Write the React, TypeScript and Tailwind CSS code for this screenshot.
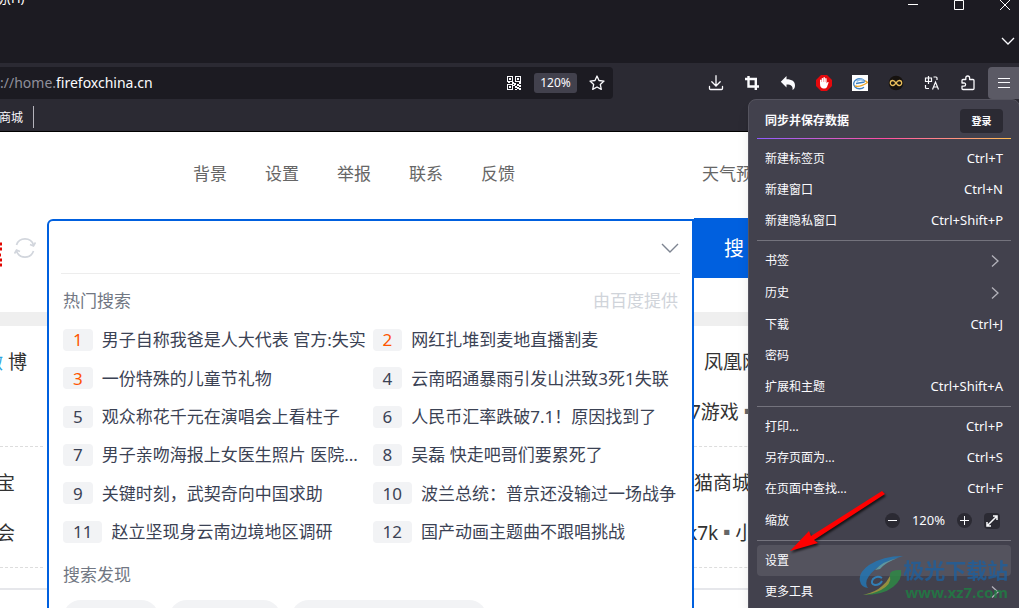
import React from 'react'

const hotList = [
  '男子自称我爸是人大代表 官方:失实',
  '网红扎堆到麦地直播割麦',
  '一份特殊的儿童节礼物',
  '云南昭通暴雨引发山洪致3死1失联',
  '观众称花千元在演唱会上看柱子',
  '人民币汇率跌破7.1！原因找到了',
  '男子亲吻海报上女医生照片 医院...',
  '吴磊 快走吧哥们要累死了',
  '关键时刻，武契奇向中国求助',
  '波兰总统：普京还没输过一场战争',
  '赵立坚现身云南边境地区调研',
  '国产动画主题曲不跟唱挑战',
]

const siteNav = ['背景', '设置', '举报', '联系', '反馈']

const iconBtn = 'flex size-9 shrink-0 items-center justify-center'

const WindowBar = () => (
  <header className="flex h-[63px] shrink-0 flex-col items-end justify-between bg-[#1c1b22]">
    <div className="flex w-full justify-between">
      <span className="-mt-2.5 -ml-1.5 h-5 text-[13px] leading-4 text-white">助(H)</span>
      <div className="flex h-[10px] gap-9 pr-[9px]">
        <button aria-label="最小化">
          <svg className="size-[10px]" viewBox="0 0 10 10" fill="none" stroke="#fff">
            <path d="M0 4.5h10" />
          </svg>
        </button>
        <button aria-label="最大化">
          <svg className="size-[10px]" viewBox="0 0 10 10" fill="none" stroke="#fff">
            <path d="M.5.5h9v9h-9z" />
          </svg>
        </button>
        <button aria-label="关闭">
          <svg className="size-[10px]" viewBox="0 0 10 10" fill="none" stroke="#fff">
            <path d="M0 0l10 10M10 0L0 10" />
          </svg>
        </button>
      </div>
    </div>
    <button aria-label="列出所有标签页" className="mr-[3px] mb-4 h-3">
      <svg className="h-3 w-4" viewBox="0 0 16 12" fill="none" stroke="#fbfbfe" strokeWidth="1.3">
        <path d="M2 3l6 6 6-6" />
      </svg>
    </button>
  </header>
)

const QrIcon = () => (
  <svg className="size-[15px]" viewBox="0 0 15 15" fill="#fbfbfe" shapeRendering="crispEdges">
    <path
      fillRule="evenodd"
      d="M0 0h6v6H0zM1 1v4h4V1zM8 0h6v6H8zM9 1v4h4V1zM0 8h6v6H0zM1 9v4h4V9zM2 2h2v2H2zM10 2h2v2h-2zM2 10h2v2H2z"
    />
    <path d="M1 6h2v1H1zM5 6h2v2H5zM7 7h2v2H7zM12 6h2v2h-2zM10 8h2v2h-2zM12 9h2v2h-2zM8 10h2v2H8zM10 11h2v2h-2zM8 13h2v1H8zM12 12h2v2h-2zM6 9h2v1H6z" />
  </svg>
)

const Toolbar = () => (
  <div className="flex h-9 shrink-0 items-center justify-between bg-[#2b2a33]">
    <div className="mt-1 flex h-8 w-[613px] items-center rounded-r bg-[#1c1b22] pr-2">
      <p className="flex-1 pb-px text-[14px] text-[#8f8f9b]">
        ://home.<span className="text-[#fbfbfe]">firefoxchina.cn</span>
      </p>
      <button aria-label="二维码" className="mr-3">
        <QrIcon />
      </button>
      <button className="mr-3 h-5 w-[43px] rounded-[3px] bg-[#42414d] text-[12px] text-[#fbfbfe]">120%</button>
      <button aria-label="添加书签">
        <svg className="size-4" viewBox="0 0 16 16" fill="none" stroke="#fbfbfe" strokeWidth="1.3" strokeLinejoin="round">
          <path d="M8 1l2 4.5 5 .6-3.7 3.3 1 5L8 12l-4.3 2.4 1-5L1 6.1l5-.6z" />
        </svg>
      </button>
    </div>
    <div className="flex h-9 items-center pt-1">
      <button aria-label="下载" className={iconBtn}>
        <svg className="size-4" viewBox="0 0 16 16" fill="none" stroke="#fbfbfe" strokeWidth="1.3" strokeLinecap="round">
          <path d="M8 .7v10M3.8 6.8L8 11l4.2-4.2M1.500 11.5v2q0 1 1 1h11q1 0 1-1v-2" />
        </svg>
      </button>
      <button aria-label="截图" className={iconBtn}>
        <svg className="size-4" viewBox="0 0 16 16" fill="none" stroke="#fbfbfe" strokeWidth="2.4">
          <path d="M1 4h10.8v11M4.5 1v10.5H15" />
        </svg>
      </button>
      <button aria-label="撤销" className={iconBtn}>
        <svg className="size-4" viewBox="0 0 16 16" fill="#fbfbfe">
          <path d="M6.5 1v3.3c5.5 0 8.5 2.2 8.5 6.2 0 2-.8 3.5-2.5 4.5.6-3.5-1-5.500-6-5.500v3L.8 6.8z" />
        </svg>
      </button>
      <button aria-label="广告拦截" className={iconBtn}>
        <svg className="size-4" viewBox="0 0 16 16">
          <path d="M5 0h6l5 5v6l-5 5H5l-5-5V5z" fill="#e4090d" />
          <path
            d="M4 8.500V5q.7-.8 1.400 0v2h.3V3.300q.7-.8 1.400 0V7h.3V2.500q.8-.8 1.500 0V7h.3V3.500q.7-.8 1.400 0v5l1-1.500q1.200-.3 1 .6L11 12q-.9 1.500-2.500 1.500H7.200Q4 13 4 8.500z"
            fill="#fff"
          />
        </svg>
      </button>
      <button aria-label="网页助手" className={iconBtn}>
        <svg className="size-4" viewBox="0 0 16 16" fill="none">
          <path d="M0 0h16v16H0z" fill="#fff" />
          <path d="M12 12.2A6 5 0 1 1 13 6.5M4 8.5l8.5-1.5" stroke="#3c7fc0" strokeWidth="1.3" />
          <path d="M4.5 6.2q3.5-3 7-1" stroke="#8dbbe6" strokeWidth="2" />
          <path d="M3 11q5 1.5 12.5-3.5-1-1.5-2.5-1.5" stroke="#eda528" strokeWidth="1.4" />
        </svg>
      </button>
      <button aria-label="无限新标签页" className={iconBtn}>
        <svg className="size-4" viewBox="0 0 16 16" fill="none">
          <circle cx="8" cy="8" r="7.3" fill="#16120f" />
          <path
            d="M8 8c-1.500-2-2.200-2.500-3.200-2.500a2.400 2.400 0 0 0 0 5C5.800 10.500 6.500 10 8 8s2.200-2.500 3.200-2.500a2.400 2.400 0 0 1 0 5C10.200 10.500 9.500 10 8 8z"
            stroke="#e8bd5b"
            strokeWidth="1.3"
          />
        </svg>
      </button>
      <button aria-label="翻译" className={iconBtn}>
        <svg className="size-4" viewBox="0 0 16 16" fill="none" stroke="#fbfbfe" strokeWidth="1.2">
          <path d="M1.5 3h6v3.500h-6zM4.500 1v8M9.500 2h2.500q1 0 1 1v2M1.500 10v2.500q0 1 1 1H5M8.500 14.500L11.500 7l3 7.500M9.500 12h4" />
        </svg>
      </button>
      <button aria-label="扩展" className={iconBtn}>
        <svg className="size-4" viewBox="0 0 16 16" fill="none" stroke="#fbfbfe" strokeWidth="1.3" strokeLinejoin="round">
          <path d="M5.800 4.500V3q0-2 1.900-2t1.900 2v1.500H13q1 0 1 1v8q0 1-1 1H3q-1 0-1-1v-2.300h2q1.600 0 1.600-1.600T4 8H2V5.500q0-1 1-1z" />
        </svg>
      </button>
      <button
        aria-label="打开应用程序菜单"
        className="ml-0.5 flex h-8 w-[31px] items-center justify-center rounded-l bg-[#5b5a65]"
      >
        <svg className="h-3 w-3" viewBox="0 0 12 12" stroke="#fbfbfe" strokeWidth="1">
          <path d="M0 1.5h12M0 5.5h12M0 10.5h12" />
        </svg>
      </button>
    </div>
  </div>
)

const Suggestions = () => (
  <div className="absolute inset-x-0 top-px h-[480px] rounded-tl-md border-2 border-[#0060df] bg-white">
    <div className="mx-3 flex h-[53px] items-center border-b border-[#ededed] pr-px">
      <input aria-label="搜索" className="h-10 flex-1 outline-none" />
      <svg className="h-3 w-[18px]" viewBox="0 0 18 12" fill="none" stroke="#7d8491" strokeWidth="1.4">
        <path d="M1 3l8 8 8-8" />
      </svg>
    </div>
    <div className="pr-3 pl-[14px]">
      <div className="mt-[15px] flex justify-between pr-0.5 text-[17px] leading-6">
        <h2 className="text-[#717783]">热门搜索</h2>
        <span className="text-[#d0d4da]">由百度提供</span>
      </div>
      <ol className="mt-2 grid h-[230px] grid-cols-2 grid-rows-6 items-center gap-x-0.5 text-[17px] text-[#3b4254]">
        {hotList.map((title, i) => (
          <li key={title} className="flex items-center whitespace-nowrap">
            <span
              className={`mr-[9px] flex h-[22px] items-center rounded bg-[#f2f3f5] px-[10px] ${i < 3 ? 'text-[#ff5500]' : ''}`}
            >
              {i + 1}
            </span>
            <a href="#">{title}</a>
          </li>
        ))}
      </ol>
      <h2 className="mt-3 text-[17px] leading-6 text-[#717783]">搜索发现</h2>
      <div className="mt-[13px] flex gap-[10px]">
        <span className="h-9 w-24 rounded-full bg-[#f2f3f5]" />
        <span className="h-9 w-28 rounded-full bg-[#f2f3f5]" />
        <span className="h-9 w-[196px] rounded-full bg-[#f2f3f5]" />
      </div>
    </div>
  </div>
)

const Page = () => (
  <main className="flex-1 overflow-hidden bg-white">
    <nav className="flex h-[84px] items-center justify-between text-[17px] text-[#666]">
      <div className="flex gap-[38px] pl-[193px]">
        {siteNav.map((item) => (
          <a key={item} href="#">
            {item}
          </a>
        ))}
      </div>
      <a href="#" className="w-[317px]">
        天气预
      </a>
    </nav>
    <div className="mt-0.5 flex h-[94px]">
      <div className="flex h-[60px] w-[47px] items-center gap-3 overflow-hidden">
        <svg className="mt-3 h-8 w-0.5" viewBox="0 0 2 32" stroke="#e10601" strokeWidth="3">
          <path d="M0 6h2M0 11h2M0 17h1M0 22h2M0 27h2" />
        </svg>
        <svg className="size-[22px] shrink-0" viewBox="0 0 22 22" fill="none" stroke="#d2d6dd" strokeWidth="1.7">
          <path d="M2.5 8A9 9 0 0 1 19.5 8M19.5 14A9 9 0 0 1 2.5 14M21.5 5.5L19.5 9l-3.5-1.5M.5 16.5L2.5 13 6 14.5" />
        </svg>
      </div>
      <div className="relative z-10 flex-1">
        <Suggestions />
      </div>
      <button className="h-[60px] w-[325px] bg-[#0060df] pt-0.5 pl-[30px] text-left text-[20px] text-white">搜</button>
    </div>
    <div className="h-3.5 bg-[#efefef]" />
    <div className="flex justify-between overflow-hidden border-b-2 border-[#e6e7eb] pb-5 text-[19px] text-[#333]">
      <ul className="flex w-[43px] flex-col">
        <li className="flex h-[121px] justify-end border-b border-dashed border-[#ddd] pt-[22px] pr-4">
          <a href="#" className="leading-7 whitespace-nowrap">
            <span className="text-[#29a3e0]">微</span> 博
          </a>
        </li>
        <li className="flex h-[121px] flex-col items-end gap-[22px] border-b border-dashed border-[#ddd] pt-[22px] pr-7">
          <a href="#" className="leading-7 whitespace-nowrap">宝</a>
          <a href="#" className="leading-7 whitespace-nowrap">会</a>
        </li>
      </ul>
      <ul className="flex w-[325px] flex-col">
        <li className="flex h-[121px] flex-col gap-[22px] border-b border-dashed border-[#ddd] pt-[22px]">
          <a href="#" className="pl-[10px] leading-7">凤凰网</a>
          <a href="#" className="-ml-1 leading-7">
            7游戏<span className="-ml-px text-[#666]">▪</span>
          </a>
        </li>
        <li className="flex h-[121px] flex-col gap-[22px] border-b border-dashed border-[#ddd] pt-[22px]">
          <a href="#" className="leading-7">猫商城</a>
          <a href="#" className="-ml-[7px] leading-7">
            k7k<span className="-mx-px text-[#666]">▪</span>小
          </a>
        </li>
      </ul>
    </div>
  </main>
)

type MenuItemProps = { label: string; hint?: string; sub?: boolean; active?: boolean }

const MenuItem = ({ label, hint, sub, active }: MenuItemProps) => (
  <button
    className={`flex w-full items-center justify-between rounded px-2 ${sub ? 'h-8' : 'h-[31px]'} ${active ? 'bg-[#54535e]' : ''}`}
  >
    <span>{label}</span>
    {hint && <span className="text-[13px]">{hint}</span>}
    {sub && (
      <svg className="mr-1 h-3 w-2" viewBox="0 0 8 12" fill="none" stroke="#b4b3bb" strokeWidth="1.3">
        <path d="M1 .5L7 6l-6 5.500" />
      </svg>
    )}
  </button>
)

const Divider = () => <hr className="my-1 border-[#74737d]" />

const AppMenu = () => (
  <aside className="absolute top-[99px] -right-px z-20 h-[560px] w-[272px] rounded-lg border border-[#55545f] bg-[#42414d] px-2 text-[12px] text-[#fbfbfe] shadow-lg">
    <div className="flex h-[38px] items-center justify-between px-2 pt-1">
      <b>同步并保存数据</b>
      <button className="h-6 w-[43px] rounded bg-[#2b2a33] text-[10px] font-bold">登录</button>
    </div>
    <div className="mb-1 h-px bg-linear-to-r from-[#9059ff] via-[#ff4aa2] to-[#ffbd4f]" />
    <MenuItem label="新建标签页" hint="Ctrl+T" />
    <MenuItem label="新建窗口" hint="Ctrl+N" />
    <MenuItem label="新建隐私窗口" hint="Ctrl+Shift+P" />
    <Divider />
    <MenuItem label="书签" sub />
    <MenuItem label="历史" sub />
    <MenuItem label="下载" hint="Ctrl+J" />
    <MenuItem label="密码" />
    <MenuItem label="扩展和主题" hint="Ctrl+Shift+A" />
    <Divider />
    <MenuItem label="打印..." hint="Ctrl+P" />
    <MenuItem label="另存页面为..." hint="Ctrl+S" />
    <MenuItem label="在页面中查找..." hint="Ctrl+F" />
    <div className="flex h-8 items-center pt-px pr-[11px] pl-2">
      <span className="flex-1">缩放</span>
      <button aria-label="缩小" className="flex size-[15px] items-center justify-center rounded-full bg-[#2b2a33]">
        <svg className="size-[9px]" viewBox="0 0 9 9" stroke="#fbfbfe">
          <path d="M0 4.5h9" />
        </svg>
      </button>
      <span className="w-[57px] text-center text-[13px]">120%</span>
      <button aria-label="放大" className="flex size-[15px] items-center justify-center rounded-full bg-[#2b2a33]">
        <svg className="size-[9px]" viewBox="0 0 9 9" stroke="#fbfbfe">
          <path d="M0 4.5h9M4.5 0v9" />
        </svg>
      </button>
      <button aria-label="全屏" className="ml-3 flex size-4 items-center justify-center rounded-sm bg-[#2b2a33]">
        <svg className="size-3" viewBox="0 0 12 12" fill="none" stroke="#fbfbfe" strokeWidth="1.5">
          <path d="M1 11L11 1M7 1h4v4M1 7v4h4" />
        </svg>
      </button>
    </div>
    <Divider />
    <MenuItem label="设置" active />
    <MenuItem label="更多工具" sub />
  </aside>
)

const Watermark = () => (
  <div className="pointer-events-none absolute top-[556px] right-[11px] z-30 flex items-start gap-0.5 opacity-80">
    <svg className="h-[42px] w-[44px]" viewBox="0 0 44 42" fill="none">
      <path d="M44 0Q24 0 10 9-1 17 1 25q1 6 8 7-4-5 1-12Q18 8 44 0z" fill="#2278b8" />
      <path d="M39 2Q24 5 16 14l5-1Q27 6 39 2z" fill="#62a8b0" />
      <path d="M42 14q2 9-8 17-10 8-30 8 13-2 20-8 8-6 7-12-1-5 11-5z" fill="#2d8c45" />
      <path d="M31 20q2 8-9 14-8 4-18 5 13-3 19-9 5-4 8-10z" fill="#a9a33c" />
      <path d="M23 22q-5-3-9 1-3 5 2 6 5 0 7-4" stroke="#2f8fd0" strokeWidth="2" />
    </svg>
    <div className="flex flex-col pt-0.5">
      <span className="-mr-0.5 -ml-0.5 text-[21px] leading-6 font-bold text-[#1f5f9c]">极光下载站</span>
      <span className="text-[15px] leading-5 font-bold text-[#1f8043]">www.xz7.com</span>
    </div>
  </div>
)

const App = () => {
  return (
    <div className="relative flex h-screen flex-col overflow-hidden bg-white font-['Noto_Sans','Noto_Sans_CJK_SC',sans-serif]">
      <WindowBar />
      <Toolbar />
      <div className="flex h-[33px] shrink-0 items-center border-b border-black bg-[#2b2a33] text-[12px] text-[#fbfbfe]">
        <a href="#" className="mt-1.5 -ml-px">商城</a>
        <span className="mt-1 ml-2.5 h-[22px] w-px bg-[#b4b3bb]" />
      </div>
      <Page />
      <AppMenu />
      <svg
        className="pointer-events-none absolute top-[488px] right-[130px] z-30 h-[70px] w-[104px] drop-shadow-[1px_2px_1px_rgba(0,0,0,0.7)]"
        viewBox="0 0 104 70"
      >
        <path d="M5 63l19-20 2 5L97 3l3 3-71 46 4 3z" fill="#fe0000" />
      </svg>
      <Watermark />
    </div>
  )
}

export default App
